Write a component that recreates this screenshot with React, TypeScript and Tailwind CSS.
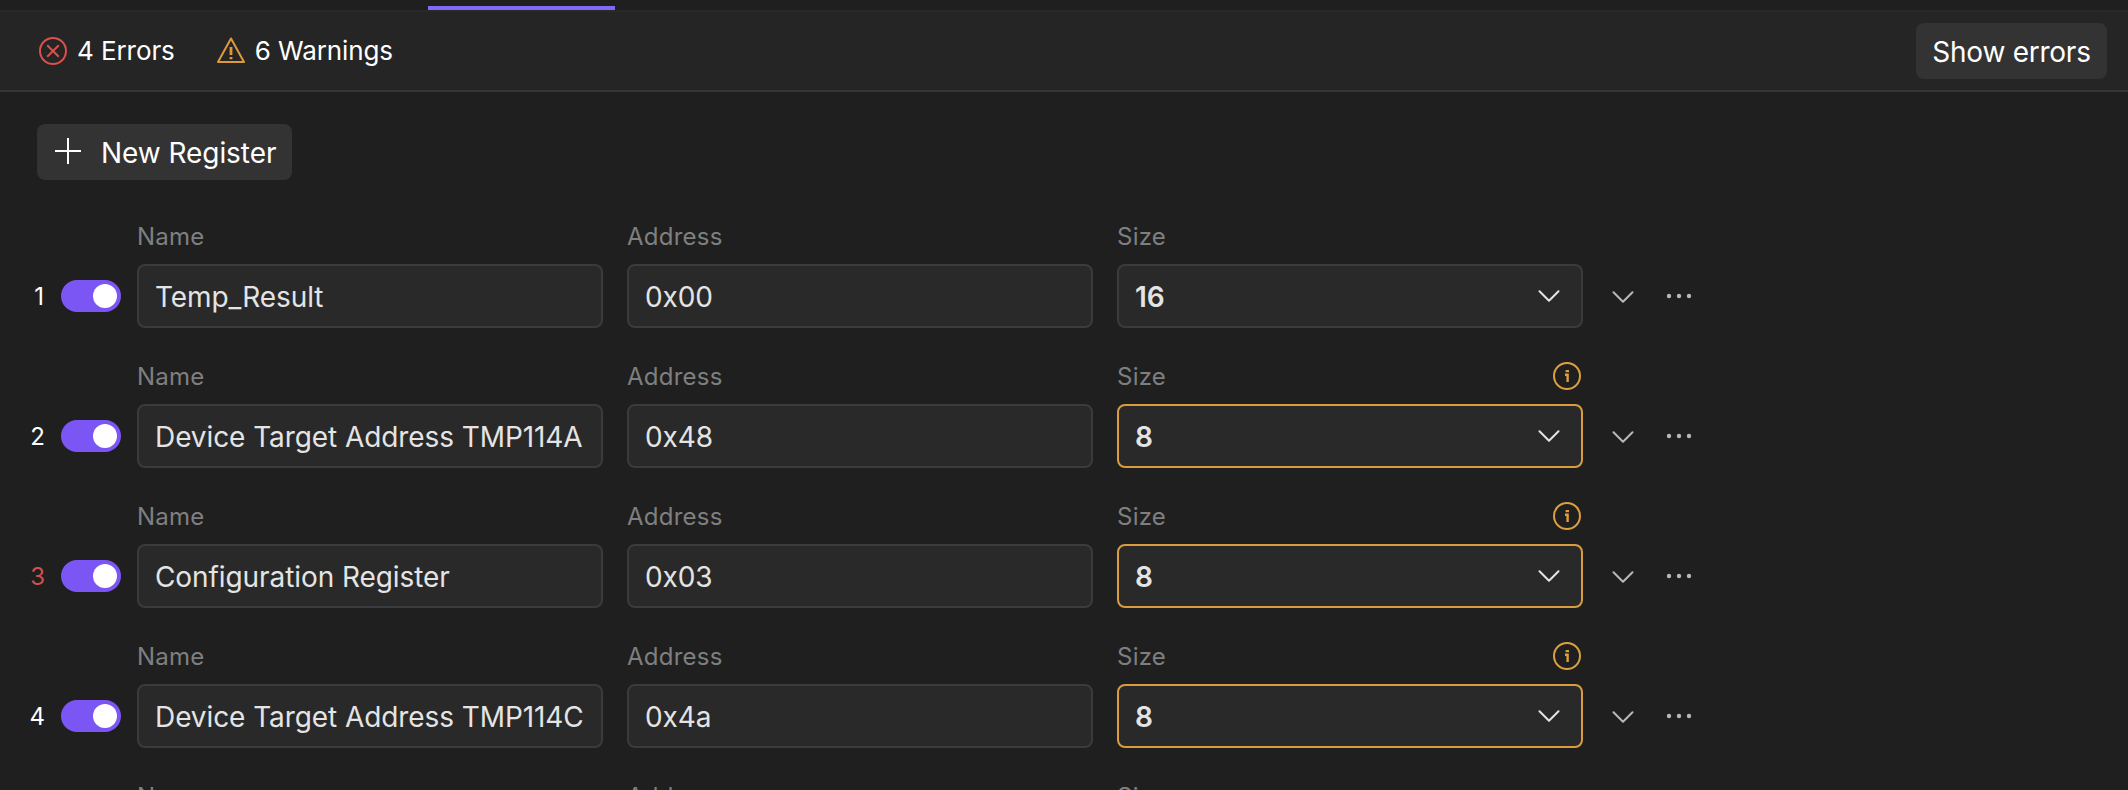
import React from "react";

type Register = { id: number; name: string; address: string; size: string; error?: boolean; warn?: boolean };

const registers: Register[] = [
  { id: 1, name: "Temp_Result", address: "0x00", size: "16" },
  { id: 2, name: "Device Target Address TMP114A", address: "0x48", size: "8", warn: true },
  { id: 3, name: "Configuration Register", address: "0x03", size: "8", error: true, warn: true },
  { id: 4, name: "Device Target Address TMP114C", address: "0x4a", size: "8", warn: true },
];

function ErrorIcon() {
  return (
    <svg className="size-7 shrink-0" viewBox="0 0 28 28" fill="none" stroke="#dc4f4b" strokeWidth="2">
      <circle cx="14" cy="14" r="13" />
      <path d="M8.2 8.2l11.6 11.6M19.8 8.2l-11.6 11.6" />
    </svg>
  );
}

function WarningIcon() {
  return (
    <svg className="size-7 shrink-0" viewBox="0 0 28 28" fill="none" stroke="#dc9a3c" strokeWidth="2" strokeLinejoin="round">
      <path d="M14 1.5L27 25H1Z" />
      <path d="M14 10v8M14 20v2.2" strokeWidth="2.8" />
    </svg>
  );
}

function InfoIcon() {
  return (
    <svg className="size-7 shrink-0" viewBox="0 0 28 28" fill="none" stroke="#dc9f40" strokeWidth="2">
      <circle cx="14" cy="14" r="13" />
      <path d="M12 12.8h2.6V20" strokeWidth="2.4" />
      <path d="M14.3 8v2.2" strokeWidth="3.4" />
    </svg>
  );
}

function Chevron({ className }: { className: string }) {
  return (
    <svg className={className} viewBox="0 0 22 12" fill="none" stroke="currentColor" strokeWidth="2" strokeLinecap="round" strokeLinejoin="round">
      <path d="M1.5 1.2L11 10.7L20.5 1.2" />
    </svg>
  );
}

function FieldLabel({ label, warn }: { label: string; warn?: boolean }) {
  return (
    <div className="flex h-7 w-[466px] items-center justify-between pr-0.5 text-[24px] leading-7 tracking-[0.25px] text-[#7f7f7f]">
      <span className="pt-0.5">{label}</span>
      {warn && <InfoIcon />}
    </div>
  );
}

function Field({ label, value, select, warn }: { label: string; value: string; select?: boolean; warn?: boolean }) {
  return (
    <div className="w-[466px]">
      <FieldLabel label={label} warn={warn} />
      <div
        className={
          "mt-3.5 flex h-16 items-center justify-between rounded-lg border-2 bg-[#292929] pl-4 pr-[21px] text-[28px] leading-9 text-[#e4e4e4] " +
          (warn ? "border-[#d99c3e]" : "border-[#3b3b3f]")
        }
      >
        <span className={select ? "whitespace-nowrap pt-0.5 font-semibold tracking-[-0.2px]" : "whitespace-nowrap pt-0.5 tracking-[-0.08px]"}>{value}</span>
        {select && <Chevron className="h-3 w-[22px]" />}
      </div>
    </div>
  );
}

function RegisterRow({ register }: { register: Register }) {
  return (
    <div className="flex h-[140px] shrink-0 items-start">
      <div
        className={
          "mt-[59px] w-[45px] text-right text-[24px] leading-8 " +
          (register.id === 1 ? "pr-px " : "") +
          (register.error ? "text-[#d0504c]" : "text-white")
        }
      >
        {register.id}
      </div>
      <div className="ml-4 mt-[58px] flex h-8 w-[60px] items-center justify-end rounded-full bg-[#7c56f5] pr-1">
        <div className="size-6 rounded-full bg-white" />
      </div>
      <div className="ml-4 flex gap-6">
        <Field label="Name" value={register.name} />
        <Field label="Address" value={register.address} />
        <Field label="Size" value={register.size} select warn={register.warn} />
      </div>
      <Chevron className="ml-[29px] mt-[69px] h-3 w-[22px] text-[#b8b8b8]" />
      <svg className="ml-8 mt-[71px] h-1.5 w-7" viewBox="0 0 28 6" fill="#b8b8b8">
        <circle cx="3" cy="3" r="2.2" />
        <circle cx="13" cy="3" r="2.2" />
        <circle cx="23" cy="3" r="2.2" />
      </svg>
    </div>
  );
}

export default function App() {
  return (
    <div className="flex h-[790px] w-[2128px] flex-col overflow-hidden bg-[#1f1f1f] font-['Inter',sans-serif] text-white">
      <div className="flex h-2.5 shrink-0 items-end pl-[428px]">
        <div className="h-1 w-[187px] bg-[#8168f5]" />
      </div>
      <div className="flex h-[82px] shrink-0 items-center border-y-2 border-b-[#353535] border-t-[#292929] bg-[#252525] pl-[39px] pr-[21px]">
        <ErrorIcon />
        <span className="ml-2.5 text-[26px] leading-8 tracking-[-0.08px]">4 Errors</span>
        <span className="ml-[42px] flex">
          <WarningIcon />
        </span>
        <span className="ml-2.5 text-[26px] leading-8 tracking-[-0.1px]">6 Warnings</span>
        <button className="ml-auto h-14 w-[191px] whitespace-nowrap rounded-lg bg-[#333333] pt-0.5 text-[28px] tracking-[-0.25px]">Show errors</button>
      </div>
      <div className="shrink-0 pl-[37px] pt-8">
        <button className="flex h-14 w-[255px] items-center whitespace-nowrap rounded-lg bg-[#333333] pl-[17px] text-[28px] tracking-[-0.06px]">
          <svg className="-mt-0.5 size-7" viewBox="0 0 28 28" stroke="white" strokeWidth="2">
            <path d="M1 14h26M14 1v26" />
          </svg>
          <span className="ml-[19px] pt-0.5">New Register</span>
        </button>
      </div>
      <div className="flex flex-col pt-[42px]">
        {registers.map((register) => (
          <RegisterRow key={register.id} register={register} />
        ))}
        <div className="flex gap-6 pl-[137px]">
          <FieldLabel label="Name" />
          <FieldLabel label="Address" />
          <FieldLabel label="Size" />
        </div>
      </div>
    </div>
  );
}
